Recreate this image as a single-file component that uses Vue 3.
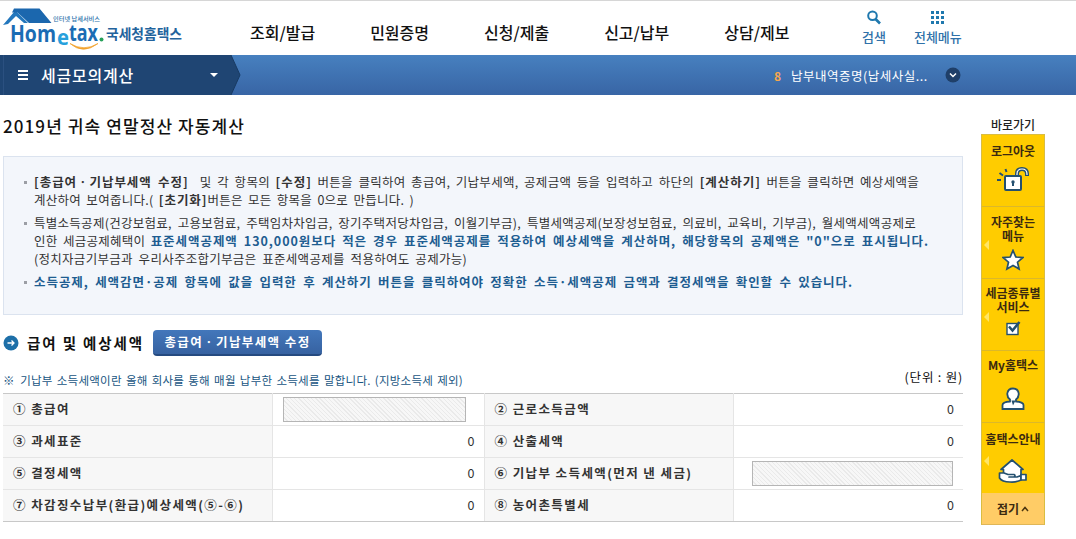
<template>
  <div class="page">
    <header class="header">
      <a class="logo">
        <svg width="190" height="54" viewBox="0 0 190 54">
          <path d="M3 24 L14 11 L17 11 L28 22 L24 22 L16 15 L8 23 Z" fill="#2377bd" />
          <path d="M14 7.500 H39.500 L51.500 22 H29 L17.500 11.500 H12 Z" fill="#1b67ae" />
          <text x="53" y="20" class="logo-small" textLength="47" lengthAdjust="spacingAndGlyphs">인터넷 납세서비스</text>
          <text x="10" y="41" class="logo-main" textLength="46" lengthAdjust="spacingAndGlyphs">Hom</text>
          <text x="57" y="44" class="logo-e" textLength="12" lengthAdjust="spacingAndGlyphs">e</text>
          <text x="69" y="40" class="logo-main" textLength="29" lengthAdjust="spacingAndGlyphs">tax</text>
          <circle cx="101.500" cy="38.500" r="2" fill="#27a15a" />
          <path d="M70 42.500 Q83 54 98 42.500 Q84 51 70 42.500 Z" fill="#f2a22c" stroke="#f2a22c" stroke-width=".7" />
          <text x="106" y="38" class="logo-name" textLength="76" lengthAdjust="spacingAndGlyphs">국세청홈택스</text>
        </svg>
      </a>
      <nav class="nav">
        <a v-for="menu in menus" :key="menu">{{ menu }}</a>
      </nav>
      <div class="tools">
        <a class="tool">
          <svg width="16" height="16" viewBox="0 0 16 16" fill="none" stroke="#1f78ae">
            <circle cx="6.500" cy="5.800" r="4.300" stroke-width="2" />
            <path d="M9.500 9 L14 13.500" stroke-width="2.600" />
          </svg>
          <span>검색</span>
        </a>
        <a class="tool">
          <svg width="14" height="16" viewBox="0 0 14 16" fill="#1f78ae">
            <template v-for="r in 3" :key="r">
              <rect v-for="c in 3" :key="c" :x="c * 5 - 5" :y="r * 5 - 4" width="3" height="3" />
            </template>
          </svg>
          <span>전체메뉴</span>
        </a>
      </div>
    </header>

    <div class="bar">
      <div class="bar-menu">
        <svg class="arrow-bg" width="241" height="40" viewBox="0 0 241 40">
          <path d="M0 0 H231 L240 20 L231 40 H0 Z" fill="#1f4573" />
          <path d="M3.500 0 V40" stroke="#2b5080" />
          <path d="M231 0 L240 20 L231 40" fill="none" stroke="#183a63" />
        </svg>
        <span class="burger"><i></i><i></i><i></i></span>
        <strong>세금모의계산</strong>
        <span class="caret"></span>
      </div>
      <div class="rank">
        <b>8</b>
        <span>납부내역증명(납세사실...</span>
        <svg width="16" height="16" viewBox="0 0 16 16">
          <circle cx="8" cy="8" r="7.500" fill="#1f3f69" />
          <path d="M5 6.500 L8 9.500 L11 6.500" fill="none" stroke="#fff" stroke-width="1.500" />
        </svg>
      </div>
    </div>

    <div class="body">
      <main class="content">
        <h1>2019년 귀속 연말정산 자동계산</h1>

        <ul class="guide">
          <li>
            <p class="l1"><b>[총급여ㆍ기납부세액 수정]</b>&nbsp; 및 각 항목의 <b>[수정]</b> 버튼을 클릭하여 총급여, 기납부세액, 공제금액 등을 입력하고 하단의 <b>[계산하기]</b> 버튼을 클릭하면 예상세액을</p>
            <p class="l2">계산하여 보여줍니다.( <b>[초기화]</b>버튼은 모든 항목을 0으로 만듭니다. )</p>
          </li>
          <li>
            <p class="l3">특별소득공제(건강보험료, 고용보험료, 주택임차차입금, 장기주택저당차입금, 이월기부금), 특별세액공제(보장성보험료, 의료비, 교육비, 기부금), 월세액세액공제로</p>
            <p class="l4">인한 세금공제혜택이 <b class="blue">표준세액공제액 130,000원보다 적은 경우 표준세액공제를 적용하여 예상세액을 계산하며, 해당항목의 공제액은 "0"으로 표시됩니다.</b></p>
            <p class="l5">(정치자금기부금과 우리사주조합기부금은 표준세액공제를 적용하여도 공제가능)</p>
          </li>
          <li>
            <p class="l6"><b class="blue">소득공제, 세액감면·공제 항목에 값을 입력한 후 계산하기 버튼을 클릭하여야 정확한 소득·세액공제 금액과 결정세액을 확인할 수 있습니다.</b></p>
          </li>
        </ul>

        <div class="section-head">
          <svg width="16" height="16" viewBox="0 0 16 16">
            <circle cx="8" cy="8" r="7.500" fill="#1d6fa8" />
            <path d="M4.500 8 H11 M8.500 5.500 L11 8 L8.500 10.500" fill="none" stroke="#fff" stroke-width="1.300" />
          </svg>
          <h2>급여 및 예상세액</h2>
          <button>총급여ㆍ기납부세액 수정</button>
        </div>

        <div class="note">
          <p>※ 기납부 소득세액이란 올해 회사를 통해 매월 납부한 소득세를 말합니다. (지방소득세 제외)</p>
          <span>(단위 : 원)</span>
        </div>

        <table>
          <colgroup>
            <col class="c1"><col class="c2"><col class="c3"><col class="c4">
          </colgroup>
          <tbody>
            <tr v-for="(row, i) in rows" :key="i">
              <template v-for="cell in row" :key="cell.label">
                <th>{{ cell.label }}</th>
                <td>
                  <input v-if="cell.input" type="text" :class="cell.input" disabled>
                  <template v-else>0</template>
                </td>
              </template>
            </tr>
          </tbody>
        </table>
      </main>

      <aside class="quick">
        <h3>바로가기</h3>
        <ul>
          <li class="q1">
            <span>로그아웃</span>
            <svg width="34" height="28" viewBox="0 0 34 28" fill="none" stroke="#24506f" stroke-width="2">
              <path d="M21 10 V8 Q21 3 26 3 Q31 3 31 8 V10" stroke-width="4" />
              <path d="M21 10 V8 Q21 3 26 3 Q31 3 31 8 V9" stroke="#fff" stroke-width="1.200" />
              <rect x="9" y="10" width="16" height="14" rx="1" fill="#fff" />
              <circle cx="17" cy="16" r="1.700" fill="#24506f" stroke="none" />
              <path d="M17 16 V20 M1 14 H5 M3.500 7 L7 9.500 M9.500 3 L10.500 6" />
            </svg>
          </li>
          <li class="q2 more">
            <span>자주찾는<br>메뉴</span>
            <svg width="22" height="22" viewBox="0 0 22 22">
              <path d="M11 1.500 L13.800 8 L20.800 8.600 L15.500 13.200 L17.100 20 L11 16.400 L4.900 20 L6.500 13.200 L1.200 8.600 L8.200 8 Z" fill="#fff" stroke="#24506f" stroke-width="1.700" />
            </svg>
          </li>
          <li class="q3 more">
            <span>세금종류별<br>서비스</span>
            <svg width="18" height="16" viewBox="0 0 18 16" fill="none" stroke="#24506f">
              <rect x="3" y="3.500" width="11" height="11" fill="#fff" stroke-width="1.400" />
              <path d="M5 6.500 L8.500 10.500 L15.500 2" stroke-width="2.500" />
            </svg>
          </li>
          <li class="q4">
            <span>My홈택스</span>
            <svg width="24" height="24" viewBox="0 0 24 24" fill="#fff" stroke="#24506f" stroke-width="1.800">
              <path d="M9 12.500 Q6 10 6.300 6.500 Q7 1.500 12 1.500 Q17 1.500 17.700 6.500 Q18 10 15 12.500 V14.500 Q22.500 15 22.500 18 V22 H1.500 V18 Q1.500 15 9 14.500 Z" />
              <path d="M10.500 13.500 H14.500 L12 18.500 Z" fill="#24506f" stroke="none" />
            </svg>
          </li>
          <li class="q5 more">
            <span>홈택스안내</span>
            <svg width="30" height="26" viewBox="0 0 30 26" fill="#fff" stroke="#24506f" stroke-width="1.700" stroke-linejoin="round">
              <path d="M5.500 20 V11.500 H3 L14 2 L25 11.500 H23 V20 Z" />
              <path d="M1.500 15 H6 L10 16.500 H16 Q18 17.500 16 19 H11 H19 L23 17.500 V22 Q18 24.500 12 24 Q4 24 1.500 20 Z" />
              <rect x="23" y="16.500" width="5" height="5.500" />
            </svg>
          </li>
          <li class="fold">접기<svg width="8" height="6" viewBox="0 0 8 6"><path d="M1 5 L4 1.500 L7 5" fill="none" stroke="#4b3510" stroke-width="1.500" /></svg></li>
        </ul>
      </aside>
    </div>
  </div>
</template>

<script setup>
const menus = ['조회/발급', '민원증명', '신청/제출', '신고/납부', '상담/제보']

const rows = [
  [{ label: '① 총급여', input: 'short' }, { label: '② 근로소득금액' }],
  [{ label: '③ 과세표준' }, { label: '④ 산출세액' }],
  [{ label: '⑤ 결정세액' }, { label: '⑥ 기납부 소득세액(먼저 낸 세금)', input: 'long' }],
  [{ label: '⑦ 차감징수납부(환급)예상세액(⑤-⑥)' }, { label: '⑧ 농어촌특별세' }]
]
</script>

<style>
body {
  margin: 0;
  background: #fff;
}
</style>

<style scoped>
.page {
  width: 1076px;
  height: 539px;
  overflow: hidden;
  font-family: "Noto Sans CJK KR", sans-serif;
  font-size: 12.5px;
  color: #333;
}

h1, h2, h3, p, ul {
  margin: 0;
  padding: 0;
  list-style: none;
}

svg {
  display: block;
  flex: none;
}

.header {
  display: flex;
  height: 55px;
  box-sizing: border-box;
  border-top: 1px solid #d6d6d6;
}

.logo {
  width: 250px;
}

.logo-small {
  font-size: 6px;
  font-weight: 500;
  fill: #2d72ab;
}

.logo-main {
  font-family: "Open Sans", sans-serif;
  font-size: 23px;
  font-weight: 700;
  fill: #1b6cb4;
}

.logo-e {
  font-family: "Open Sans", sans-serif;
  font-size: 21px;
  font-weight: 700;
  fill: #26a0dc;
}

.logo-name {
  font-size: 14px;
  font-weight: 700;
  fill: #23639c;
}

.nav {
  display: flex;
  gap: 55px;
  width: 612px;
}

.nav a {
  padding-top: 19px;
  font-size: 16px;
  line-height: 24px;
  font-weight: 500;
  color: #111;
}

.tools {
  display: flex;
  gap: 28px;
}

.tool {
  display: flex;
  flex-direction: column;
  align-items: center;
  padding-top: 9px;
  font-size: 13px;
  line-height: 20px;
  font-weight: 500;
  color: #2f71a9;
}

.tool span {
  padding-top: 1px;
}

.bar {
  display: flex;
  justify-content: space-between;
  height: 40px;
  background: linear-gradient(#4780bf, #3865a5);
  color: #fff;
}

.bar-menu {
  position: relative;
  display: flex;
  align-items: center;
  width: 241px;
}

.arrow-bg {
  position: absolute;
  left: 0;
  top: 0;
}

.burger {
  position: relative;
  display: flex;
  flex-direction: column;
  gap: 2px;
  width: 10px;
  margin-left: 18px;
}

.burger i {
  height: 2px;
  background: #fff;
}

.bar-menu strong {
  position: relative;
  width: 169px;
  margin-left: 13px;
  font-size: 16px;
  font-weight: 500;
  letter-spacing: .8px;
}

.caret {
  position: relative;
  border: 4px solid transparent;
  border-top-color: #fff;
  border-bottom: 0;
}

.rank {
  display: flex;
  align-items: center;
  width: 302px;
}

.rank b {
  width: 17px;
  font-size: 12px;
  color: #f8a74c;
}

.rank span {
  width: 154px;
  letter-spacing: .5px;
}

.body {
  display: flex;
}

.content {
  width: 960px;
  padding-left: 3px;
}

h1 {
  padding: 17px 0;
  font-size: 17px;
  line-height: 27px;
  font-weight: 500;
  letter-spacing: 1.1px;
  color: #111;
  white-space: nowrap;
}

.guide {
  display: flex;
  flex-direction: column;
  gap: 5px;
  height: 159px;
  box-sizing: border-box;
  padding: 16px 0 0 30px;
  border: 1px solid #dbe3ef;
  background: #f3f6fb;
}

.guide li {
  position: relative;
}

.guide li::before {
  content: "";
  position: absolute;
  left: -10px;
  top: 8px;
  width: 3px;
  height: 3px;
  background: #9b9ea5;
}

.guide p {
  line-height: 18px;
  letter-spacing: .28px;
  text-align-last: justify;
  white-space: nowrap;
}

.guide b {
  letter-spacing: .95px;
}

.guide .blue {
  color: #1e5d91;
}

.l1 { width: 885px; }
.l2 { width: 380px; }
.l3 { width: 882px; }
.l4 { width: 895px; }
.l5 { width: 433px; }
.l6 { width: 819px; }

.section-head {
  display: flex;
  align-items: center;
  height: 26px;
  margin-top: 15px;
}

h2 {
  width: 126px;
  padding-left: 8px;
  font-size: 14.5px;
  line-height: 24px;
  font-weight: 700;
  letter-spacing: 1.9px;
  color: #111;
  white-space: nowrap;
}

button {
  width: 169px;
  height: 26px;
  padding: 0 0 2px;
  border: 0;
  border-bottom: 2px solid #254a80;
  border-radius: 4px;
  background: linear-gradient(#4377bb, #3762a1);
  color: #fff;
  font-family: inherit;
  font-size: 12.5px;
  font-weight: 700;
  letter-spacing: 1.4px;
  white-space: nowrap;
}

.note {
  display: flex;
  justify-content: space-between;
  height: 37px;
}

.note p {
  width: 460px;
  padding-top: 15px;
  font-size: 11.5px;
  line-height: 18px;
  letter-spacing: .25px;
  color: #18557f;
  text-align-last: justify;
  white-space: nowrap;
}

.note span {
  padding-top: 12px;
  line-height: 18px;
  letter-spacing: .8px;
  color: #111;
}

table {
  width: 960px;
  table-layout: fixed;
  border-collapse: collapse;
  border-top: 1px solid #c8c8c8;
  border-bottom: 1px solid #c8c8c8;
}

.c1 { width: 269px; }
.c2 { width: 212px; }
.c3 { width: 249px; }
.c4 { width: 230px; }

th, td {
  height: 29px;
  padding: 0 9px 2px 10px;
  border-bottom: 1px solid #e5e5e5;
  line-height: 20px;
}

tr:last-child th,
tr:last-child td {
  border-bottom-color: #c8c8c8;
}

th {
  border-right: 1px solid #e5e5e5;
  background: #f7f7f7;
  font-weight: 700;
  letter-spacing: 1.4px;
  text-align: left;
  white-space: nowrap;
}

td {
  text-align: right;
}

td + th {
  border-left: 1px solid #e5e5e5;
}

input {
  display: block;
  width: 183px;
  height: 25px;
  box-sizing: border-box;
  margin-top: 2px;
  padding: 0;
  border: 1px solid #b5b5b5;
  background: repeating-linear-gradient(45deg, #f7f7f7 0, #f7f7f7 2px, #eaeaea 2px, #eaeaea 3px);
}

.long {
  width: 201px;
  margin-left: auto;
  margin-right: 1px;
}

.quick {
  width: 64px;
  margin-left: 18px;
  padding-top: 20px;
}

h3 {
  font-size: 12px;
  line-height: 19px;
  font-weight: 500;
  color: #222;
  text-align: center;
}

.quick ul {
  border: 1px solid #d9bd42;
  border-bottom-color: #dfb658;
}

.quick li {
  position: relative;
  display: flex;
  flex-direction: column;
  align-items: center;
  height: 71px;
  border-bottom: 1px solid #dcb82a;
  background: #fc0;
  color: #3b2a10;
  font-size: 12px;
  line-height: 14px;
  font-weight: 700;
  text-align: center;
  white-space: nowrap;
}

.quick li span {
  padding-top: 9px;
}

.quick .q1 svg {
  margin-top: 8px;
}

.quick .q2 span {
  padding-top: 8px;
}

.quick .q2 svg {
  margin-top: 6px;
}

.quick .q3 span,
.quick .q4 span {
  padding-top: 7px;
}

.quick .q3 svg {
  margin-top: 6px;
}

.quick .q4 svg {
  margin-top: 15px;
}

.quick .q5 svg {
  margin-top: 12px;
}

.more::before {
  content: "";
  position: absolute;
  left: 2px;
  top: 33px;
  border: 5px solid transparent;
  border-right-color: #ffe566;
  border-left: 0;
}

.quick .q5 {
  height: 70px;
  border-bottom: 0;
}

.quick .fold {
  flex-direction: row;
  justify-content: center;
  gap: 2px;
  height: 31px;
  border-bottom: 0;
  background: #fc6;
}
</style>
